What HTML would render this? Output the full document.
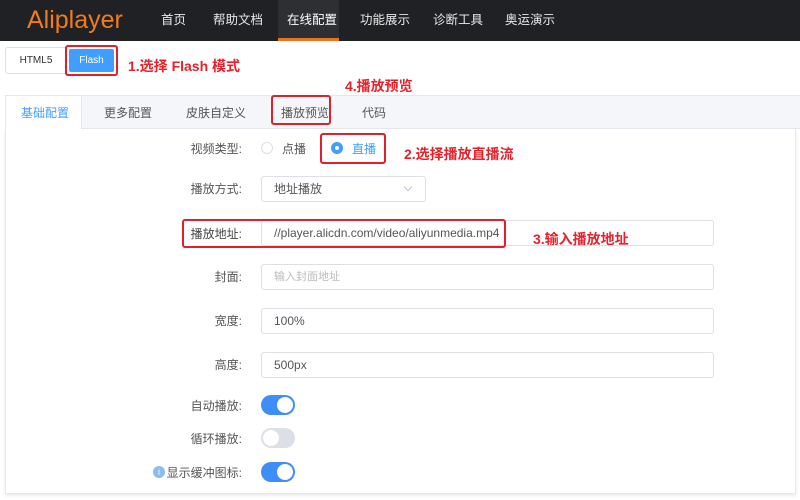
<!DOCTYPE html>
<html><head><meta charset="utf-8"><style>
*{margin:0;padding:0;box-sizing:border-box}
body{width:800px;height:500px;background:#fff;position:relative;overflow:hidden;font-family:"Liberation Sans","Noto Sans CJK SC",sans-serif;font-size:12px;color:#555}
.a{position:absolute}
.hdr{left:0;top:0;width:800px;height:41px;background:#202124}
.nav{top:0;height:41px;line-height:40px;color:#e8e8e8;font-size:12.5px}
.red{color:#e8202a;font-size:14px;font-weight:bold}
.rb{border:2px solid #e0202a;border-radius:3px}
.lbl{width:120px;text-align:right;font-size:12px;color:#555}
.inp{border:1px solid #dcdfe6;border-radius:3px;background:#fff;height:26px;line-height:24px;padding-left:12px;color:#555}
.tg{width:34px;height:20px;border-radius:10px;background:#3f8ef7}
.tg i{position:absolute;top:2px;right:2px;width:16px;height:16px;border-radius:50%;background:#fff}
.tg.off{background:#dcdfe6}
.tg.off i{left:2px;right:auto}
</style></head><body>
<div class="a hdr"></div>
<div class="a" style="left:27px;top:4px;color:#f07c1e;font-size:25px;line-height:32px">Aliplayer</div>
<div class="a" style="left:278px;top:0;width:61px;height:41px;background:#2e2f32;border-bottom:3px solid #e8741e"></div>
<div class="a nav" style="left:161px">首页</div>
<div class="a nav" style="left:213px">帮助文档</div>
<div class="a nav" style="left:287px;color:#fff">在线配置</div>
<div class="a nav" style="left:360px">功能展示</div>
<div class="a nav" style="left:433px">诊断工具</div>
<div class="a nav" style="left:505px">奥运演示</div>

<div class="a" style="left:5px;top:47px;width:62px;height:27px;border:1px solid #dcdfe6;border-radius:3px 0 0 3px;text-align:center;line-height:25px;font-size:10px;color:#333">HTML5</div>
<div class="a rb" style="left:65px;top:45px;width:53px;height:31px;padding:2px"><div style="background:#409eff;height:23px;border-radius:2px;color:#fff;font-size:10px;text-align:center;line-height:23px">Flash</div></div>
<div class="a red" style="left:128px;top:56px">1.选择 Flash 模式</div>
<div class="a red" style="left:345px;top:76px">4.播放预览</div>

<div class="a" style="left:5px;top:95px;width:795px;height:34px;background:#f4f6f9;border-top:1px solid #e4e7ed;border-bottom:1px solid #e4e7ed"></div>
<div class="a" style="left:5px;top:95px;width:77px;height:34px;background:#fff;border:1px solid #e4e7ed;border-bottom:none"></div>
<div class="a" style="left:5px;top:129px;width:791px;height:365px;border:1px solid #e4e7ed;border-top:none;box-shadow:0 2px 3px rgba(0,0,0,.08)"></div>
<div class="a" style="left:21px;top:104px;color:#409eff">基础配置</div>
<div class="a" style="left:104px;top:104px">更多配置</div>
<div class="a" style="left:186px;top:104px">皮肤自定义</div>
<div class="a rb" style="left:271px;top:95px;width:60px;height:30px"></div>
<div class="a" style="left:281px;top:104px">播放预览</div>
<div class="a" style="left:362px;top:104px">代码</div>

<div class="a lbl" style="left:122px;top:140px">视频类型:</div>
<div class="a" style="left:261px;top:142px;width:12px;height:12px;border:1px solid #dcdfe6;border-radius:50%"></div>
<div class="a" style="left:282px;top:140px;color:#555">点播</div>
<div class="a rb" style="left:320px;top:133px;width:66px;height:31px"></div>
<div class="a" style="left:331px;top:142px;width:12px;height:12px;border-radius:50%;background:#409eff"><div style="margin:4px;width:4px;height:4px;border-radius:50%;background:#fff"></div></div>
<div class="a" style="left:352px;top:140px;color:#409eff">直播</div>
<div class="a red" style="left:404px;top:144px">2.选择播放直播流</div>

<div class="a lbl" style="left:122px;top:180px">播放方式:</div>
<div class="a inp" style="left:261px;top:176px;width:165px">地址播放</div>
<div class="a" style="left:405px;top:184px;width:6px;height:6px;border-right:1px solid #c0c4cc;border-bottom:1px solid #c0c4cc;transform:rotate(45deg)"></div>

<div class="a inp" style="left:261px;top:220px;width:453px">//player.alicdn.com/video/aliyunmedia.mp4</div>
<div class="a rb" style="left:182px;top:219px;width:324px;height:29px"></div>
<div class="a lbl" style="left:122px;top:225px;color:#444">播放地址:</div>
<div class="a red" style="left:533px;top:229px">3.输入播放地址</div>

<div class="a lbl" style="left:122px;top:268px">封面:</div>
<div class="a inp" style="left:261px;top:264px;width:453px;color:#bbb;font-size:11px">输入封面地址</div>
<div class="a lbl" style="left:122px;top:312px">宽度:</div>
<div class="a inp" style="left:261px;top:308px;width:453px">100%</div>
<div class="a lbl" style="left:122px;top:356px">高度:</div>
<div class="a inp" style="left:261px;top:352px;width:453px">500px</div>

<div class="a lbl" style="left:122px;top:397px">自动播放:</div>
<div class="a tg" style="left:261px;top:395px"><i></i></div>
<div class="a lbl" style="left:122px;top:430px">循环播放:</div>
<div class="a tg off" style="left:261px;top:428px"><i></i></div>
<div class="a" style="left:153px;top:466px;width:12px;height:12px;border-radius:50%;background:#8cbcf0;color:#fff;font-size:9px;text-align:center;line-height:12px">i</div>
<div class="a lbl" style="left:122px;top:464px">显示缓冲图标:</div>
<div class="a tg" style="left:261px;top:462px"><i></i></div>
</body></html>
